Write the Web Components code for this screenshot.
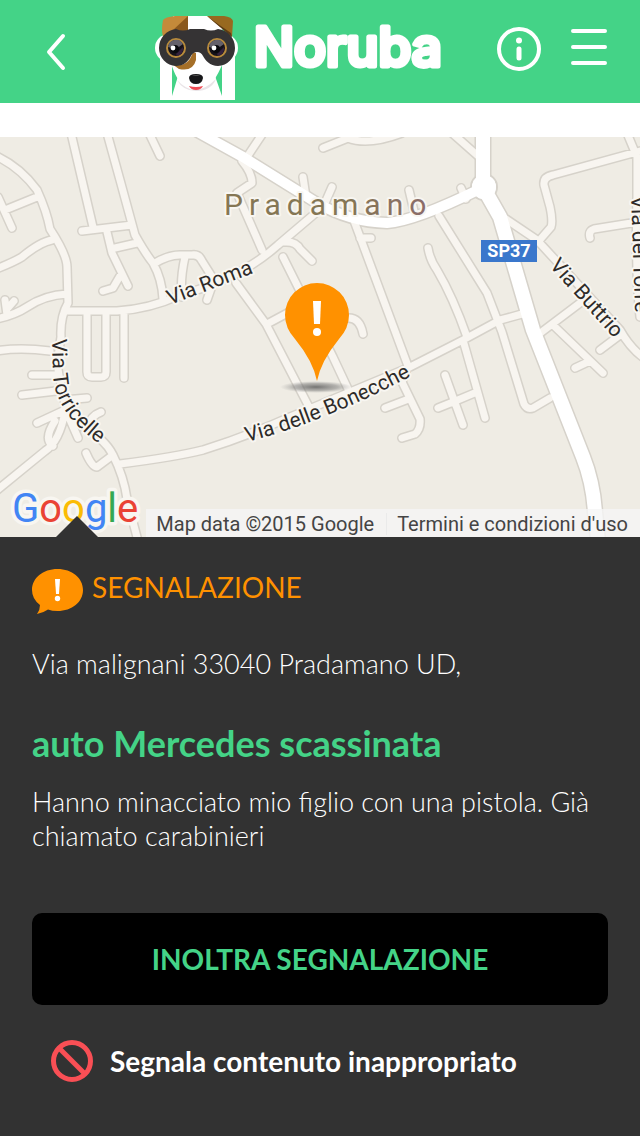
<!DOCTYPE html>
<html lang="it">
<head>
<meta charset="utf-8">
<meta name="viewport" content="width=device-width, initial-scale=1">
<title>Noruba</title>
<style>
  html { background: #323232; }
  body { margin: 0; font-family: Lato, sans-serif; }
</style>
</head>
<body>
<noruba-header></noruba-header>
<main>
  <street-map></street-map>
  <report-panel>
    <report-kind slot="kind">SEGNALAZIONE</report-kind>
    <span slot="address">Via malignani 33040 Pradamano UD,</span>
    <span slot="title">auto Mercedes scassinata</span>
    <span slot="text">Hanno minacciato mio figlio con una pistola. Già chiamato carabinieri</span>
    <forward-button slot="actions">INOLTRA SEGNALAZIONE</forward-button>
    <flag-button slot="actions">Segnala contenuto inappropriato</flag-button>
  </report-panel>
</main>

<script>
class NorubaLogo extends HTMLElement {
  constructor() {
    super();
    this.attachShadow({ mode: "open" }).innerHTML = `
      <style>
        :host { display: block; }
        svg { display: block; }
        text { font: 500 53px Inter, sans-serif; fill: #fff; stroke: #fff; stroke-width: 5; stroke-linejoin: round; }
      </style>
      <svg width="300" height="84" viewBox="0 0 300 84" role="img" aria-label="Noruba">
        <g fill="#fff">
          <circle cx="14" cy="32" r="14"/>
          <circle cx="69" cy="32" r="14"/>
          <path d="M5 36H17V80L23 60H60L67 80V36H80V84H5Z"/>
          <path d="M18 0H66L70 42C66 52 61 62 57 67Q41 82 25 66C20 60 17 50 14 42Z"/>
        </g>
        <path d="M22 64Q40 84 61 63Q56 75 41 75Q28 75 22 64Z" fill="#e9e4e7"/>
        <path d="M8 4Q10 1 20 0H33V14L8 21Q6 14 8 4Z" fill="#c48a3a"/>
        <path d="M33 0V15H17Z" fill="#8b591d"/>
        <path d="M52 0H69Q77 1 78 5L77 21Z" fill="#98691f"/>
        <path d="M52 0L65 11L77 21L76 17Q64 9 52 0Z" fill="#5b3b15"/>
        <path d="M17 48C25 51 34 49 38 36L41 37V44Q38 56 24 53Z" fill="#a56f28"/>
        <path d="M21 13Q28 16 35 13H49Q56 16 63 13A19 19 0 0 1 80 32A18 18 0 0 1 63 50C55 50 50 44 48 40Q46 36 42 36Q38 36 36 40C33 46 28 50 21 50A18 18 0 0 1 4 32A19 19 0 0 1 21 13Z" fill="#353334"/>
        <g id="eyes">
          <g id="eye">
            <circle cx="21" cy="32" r="9" fill="#15121a" stroke="#b88b3c" stroke-width="2"/>
            <path d="M13 31A8 8 0 0 1 28 28L21 33Z" fill="#64606a"/>
            <path d="M21 38L28 31Q29 38 22 40Z" fill="#34213d"/>
            <circle cx="20" cy="33" r="4" fill="#09090c"/>
            <circle cx="18" cy="32" r="2.4" fill="#fff"/>
          </g>
          <use href="#eye" x="41"/>
        </g>
        <path d="M34 62Q34 58 41 58Q48 58 48 62Q47 68 41 68Q35 68 34 62Z" fill="#171719"/>
        <path d="M37 60Q41 58 45 60Z" fill="#555"/>
        <path d="M34 70Q41 72 48 70Q46 74 41 74Q36 74 34 70Z" fill="#ef4b55"/>
        <text x="99" y="50">Noruba</text>
      </svg>`;
  }
}
customElements.define("noruba-logo", NorubaLogo);

class NorubaHeader extends HTMLElement {
  constructor() {
    super();
    this.attachShadow({ mode: "open" }).innerHTML = `
      <style>
        :host { display: block; border-bottom: 34px solid #fff; }
        header { display: flex; align-items: center; min-height: 103px; padding: 0 33px 0 46px; box-sizing: border-box; background: #44d387; }
        button { display: block; border: 0; padding: 0; background: none; cursor: pointer; }
        svg { display: block; fill: none; stroke: #fff; stroke-width: 4; stroke-linecap: round; stroke-linejoin: round; }
        a { align-self: flex-end; margin: 0 0 3px 89px; }
        nav { display: flex; align-items: flex-start; gap: 30px; margin-left: auto; padding-bottom: 6px; }
      </style>
      <header>
        <button aria-label="Indietro">
          <svg width="20" height="38" viewBox="0 0 20 38"><path d="M17 3L3 19L17 35"/></svg>
        </button>
        <a href="#"><noruba-logo></noruba-logo></a>
        <nav>
          <button aria-label="Informazioni">
            <svg width="44" height="44" viewBox="0 0 44 44">
              <circle cx="22" cy="22" r="20"/>
              <path d="M22 22V31" stroke-width="5"/>
              <circle cx="22" cy="13.500" r="3" fill="#fff" stroke="none"/>
            </svg>
          </button>
          <button aria-label="Menu">
            <svg width="36" height="38" viewBox="0 0 36 38"><path d="M2 4H34M2 20H34M2 36H34"/></svg>
          </button>
        </nav>
      </header>`;
  }
}
customElements.define("noruba-header", NorubaHeader);

// narrow streets, drawn twice: a grey casing and a light fill over it
const STREETS = [
  "M-4 19Q20 30 37 53Q47 75 50 92Q67 118 67 130L68 166Q60 180 61 200L57 226Q60 252 72 275L83 290Q105 302 113 318Q124 340 127 362L138 404",
  "M5 73L37 60M-2 60L12 91",
  "M-4 132Q14 125 22 120Q40 105 52 103",
  "M-4 182Q15 178 27 170Q45 158 67 157",
  "M7 178L5 163M7 172L14 164",
  "M71 -4L93 90M107 -4L120 43L135 98Q145 116 153 126Q162 142 163 162",
  "M82 94L132 88M107 95L112 116L128 149M115 111L137 106M120 139L113 151L103 154",
  "M155 126Q170 117 182 118H192Q199 117 202 124L214 143L207 163M185 120Q180 142 182 160",
  "M68 174H117Q150 172 180 158Q240 142 278 108L318 74",
  "M149 -4L160 19M263 -4L247 20M242 24Q252 36 252 46L237 56L262 113",
  "M284 105Q296 104 300 112L312 124M283 120L333 220L348 252",
  "M236 146L266 187L308 268M267 187L295 172M303 40L306 60",
  "M87 176V235Q87 240 92 240H101Q106 240 106 235V176M124 176V241",
  "M120 327Q175 320 203 313Q245 300 290 280L410 230L463 203L500 183L522 177",
  "M-4 214Q20 210 50 214M32 238H57M22 258L56 254M64 263L87 261",
  "M37 286L65 273M-4 354L45 314Q60 304 65 274M55 284Q43 302 53 309M67 276L78 301M101 275Q90 279 88 290",
  "M86 316Q92 330 97 330L113 318",
  "M323 11L348 1Q368 9 402 -4M452 -4L478 19",
  "M332 50L325 66M409 53L414 74M461 51L466 62M360 101H371",
  "M353 81L408 229L402 245L420 282Q421 292 415 297L402 301M385 271L406 263",
  "M428 111Q430 123 437 133Q453 160 467 200M463 203L485 281",
  "M439 79L487 156L502 195L524 267Q527 273 533 271L550 261",
  "M445 238L463 288M438 271L453 265L477 255",
  "M500 78L537 103L620 193Q630 211 644 221",
  "M538 105L551 90Q553 84 550 70L544 48Q543 40 553 38L644 13",
  "M627 -4L637 20V60Q635 130 640 180M590 101Q588 94 594 92L644 84",
  "M535 200L580 166M553 188L603 236M575 231L590 224M600 213L620 198",
  "M347 181Q360 180 363 197"
].join("");
const MAIN_ROADS = "M196 -6L243 20L317 66Q350 85 387 86Q415 84 480 52";
const HIGHWAY = "M483 -8V50L500 80L533 193L583 320Q593 345 595 375L598 404";

class StreetMap extends HTMLElement {
  constructor() {
    super();
    this.attachShadow({ mode: "open" }).innerHTML = `
      <style>
        :host { display: block; position: relative; overflow: hidden; background: #efece4; font-family: Roboto, sans-serif; }
        svg { display: block; width: 100%; height: auto; }
        path { fill: none; stroke-linecap: round; stroke-linejoin: round; }
        .street text { font-size: 21px; fill: #2e2b29; }
        .street text, .town, .google { paint-order: stroke; stroke: #f8f6f1; stroke-width: 4; stroke-linejoin: round; }
        .town { font-size: 30px; letter-spacing: 6px; fill: url(#ink); }
        .google { font-size: 40px; stroke-width: 7; }
        .shield { font-size: 18px; font-weight: 700; fill: #fff; text-anchor: middle; }
        footer { position: absolute; right: 0; bottom: 0; display: flex; padding: 4px 0 2px; background: rgba(245, 245, 245, .8); font-size: 20px; line-height: 22px; color: #444; }
        footer > * { padding: 0 12px 0 10px; color: inherit; text-decoration: none; }
        footer a { border-left: 1px solid #eaeaea; }
      </style>
      <svg viewBox="0 0 640 400">
        <defs>
          <linearGradient id="ink"><stop offset=".6" stop-color="#857654"/><stop offset="1" stop-color="#8c6c6c"/></linearGradient>
          <radialGradient id="shade"><stop offset="0" stop-color="#555" stop-opacity=".8"/><stop offset=".6" stop-color="#777" stop-opacity=".5"/><stop offset="1" stop-color="#999" stop-opacity="0"/></radialGradient>
          <path id="torricelle" d="M52 202L53 238Q54 262 74 285Q92 304 112 315"/>
          <path id="bonecche" d="M247 305Q330 284 430 229"/>
        </defs>
        <path d="${STREETS}" stroke="#d6d2ca" stroke-width="10"/>
        <path d="${MAIN_ROADS}" stroke="#d6d2ca" stroke-width="13"/>
        <path d="${HIGHWAY}" stroke="#d6d2ca" stroke-width="17"/>
        <circle cx="484" cy="50" r="13" fill="#fff" stroke="#d6d2ca" stroke-width="2"/>
        <path d="${STREETS}" stroke="#f8f5f0" stroke-width="7"/>
        <path d="${MAIN_ROADS}" stroke="#fff" stroke-width="10"/>
        <path d="${HIGHWAY}" stroke="#fff" stroke-width="14"/>
        <circle cx="484" cy="50" r="12" fill="#fff"/>

        <text class="town" x="224" y="78">Pradamano</text>
        <g class="street">
          <text transform="translate(170 168) rotate(-21)">Via Roma</text>
          <text transform="translate(549 129) rotate(48)">Via Buttrio</text>
          <text transform="translate(631 59) rotate(88)">Via del Torre</text>
          <text><textPath href="#torricelle">Via Torricelle</textPath></text>
          <text><textPath href="#bonecche">Via delle Bonecche</textPath></text>
        </g>
        <rect x="481" y="103" width="56" height="22" fill="#3a77cc"/>
        <text class="shield" x="509" y="120">SP37</text>

        <ellipse cx="316" cy="250" rx="36" ry="6" fill="url(#shade)"/>
        <path d="M317 244Q313 224 295 202Q285 191 285 178A32 32 0 0 1 349 178Q349 191 339 202Q321 224 317 244Z" style="fill:#ff9100"/>
        <path d="M313 164H321L320 187H314Z" style="fill:#fff"/>
        <circle cx="317" cy="195" r="4" fill="#fff"/>

        <text class="google" x="12" y="385"><tspan fill="#4285f4">G</tspan><tspan fill="#ea4335">o</tspan><tspan fill="#fbbc05">o</tspan><tspan fill="#4285f4">g</tspan><tspan fill="#34a853">l</tspan><tspan fill="#ea4335">e</tspan></text>
      </svg>
      <footer><span>Map data ©2015 Google</span><a href="#">Termini e condizioni d'uso</a></footer>`;
  }
}
customElements.define("street-map", StreetMap);

class ReportKind extends HTMLElement {
  constructor() {
    super();
    this.attachShadow({ mode: "open" }).innerHTML = `
      <style>
        :host { display: flex; gap: 9px; font-size: 28px; line-height: 36px; color: #ff9100; }
        svg { flex: none; }
      </style>
      <svg width="51" height="45" viewBox="0 0 51 45">
        <path d="M25.500 0C40 0 51 9 51 21S40 42 25.500 42Q20 42 16 40.500Q11 44 5 45Q8 41 8 36Q0 30 0 21C0 9 11 0 25.500 0Z" fill="#ff9100"/>
        <path d="M23 10H28L27 25H24Z" fill="#fff"/><circle cx="25.500" cy="29.500" r="2.700" fill="#fff"/>
      </svg>
      <slot></slot>`;
  }
}
customElements.define("report-kind", ReportKind);

class ForwardButton extends HTMLElement {
  constructor() {
    super();
    this.attachShadow({ mode: "open" }).innerHTML = `
      <style>
        :host { display: block; }
        button { width: 100%; border: 0; border-radius: 10px; padding: 28px 16px; background: #000; color: #44d387; font: 700 28px/36px Lato, sans-serif; cursor: pointer; }
      </style>
      <button><slot></slot></button>`;
  }
}
customElements.define("forward-button", ForwardButton);

class FlagButton extends HTMLElement {
  constructor() {
    super();
    this.attachShadow({ mode: "open" }).innerHTML = `
      <style>
        :host { display: block; }
        button { display: flex; align-items: center; gap: 16px; border: 0; padding: 0 18px; background: none; color: #fff; font: 700 28px/36px Lato, sans-serif; text-align: left; cursor: pointer; }
        svg { flex: none; }
      </style>
      <button>
        <svg width="44" height="44" viewBox="0 0 44 44" fill="none" stroke="#f94f55" stroke-width="5"><circle cx="22" cy="22" r="18.500"/><path d="M9 9L35 35"/></svg>
        <slot></slot>
      </button>`;
  }
}
customElements.define("flag-button", FlagButton);

class ReportPanel extends HTMLElement {
  constructor() {
    super();
    this.attachShadow({ mode: "open" }).innerHTML = `
      <style>
        :host { display: block; position: relative; padding: 32px; background: #323232; color: #fff; font-size: 27px; line-height: 34px; font-weight: 300; }
        /* pointer over the map */
        :host::before { content: ""; position: absolute; left: 56px; bottom: 100%; width: 42px; height: 21px; background: #323232; clip-path: polygon(50% 0, 100% 100%, 0 100%); }
        slot[name="kind"] { font-weight: 400; }
        p, h1 { margin: 0; }
        .address { margin-top: 33px; }
        h1 { margin: 40px 0 20px; font-size: 36px; line-height: 44px; font-weight: 700; color: #44d387; }
        .actions { display: flex; flex-direction: column; gap: 34px; margin-top: 60px; }
      </style>
      <slot name="kind"></slot>
      <p class="address"><slot name="address"></slot></p>
      <h1><slot name="title"></slot></h1>
      <p><slot name="text"></slot></p>
      <div class="actions"><slot name="actions"></slot></div>`;
  }
}
customElements.define("report-panel", ReportPanel);
</script>
</body>
</html>
